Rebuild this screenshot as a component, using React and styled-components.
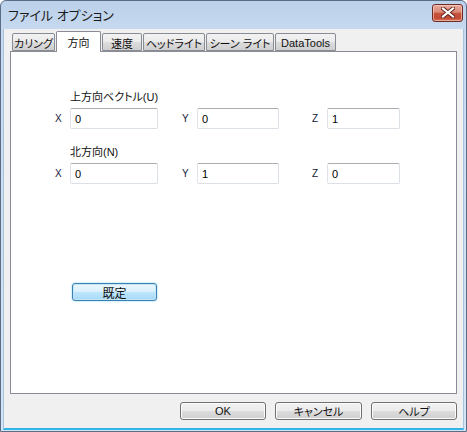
import React from 'react';
import styled, { createGlobalStyle } from 'styled-components';

const GlobalStyle = createGlobalStyle`
    html, body {
        margin: 0;
        padding: 0;
        background: #ffffff;
    }

    body {
        font-family: "Liberation Sans", "Noto Sans CJK JP", sans-serif;
        font-size: 11px;
        font-feature-settings: "palt";
        color: #000000;
    }
`;

const WindowStyled = styled.div`
    box-sizing: border-box;
    width: 467px;
    height: 432px;
    display: flex;
    flex-direction: column;
    border: 1px solid #5a6d84;
    border-radius: 6px 6px 0 0;
    background: linear-gradient(to bottom, #bcd1ea 0, #c6d9ef 30px, #d6e5f5 100%);
    overflow: hidden;
`;

const TitleBarStyled = styled.div`
    height: 28px;
    flex: none;
    display: flex;
    align-items: center;
    justify-content: space-between;
    padding: 0 3px 0 7px;
`;

const TitleStyled = styled.span`
    font-size: 13px;
    color: #1a1a1a;
    margin-top: -1px;
`;

const CloseButtonStyled = styled.div`
    box-sizing: border-box;
    width: 31px;
    height: 18px;
    margin-top: -5px;
    display: flex;
    align-items: center;
    justify-content: center;
    border: 1px solid #6e2d24;
    border-radius: 3px;
    background: linear-gradient(to bottom, #e9a99b 0, #dc8a78 45%, #c8553f 50%, #c24a34 80%, #d4715a 100%);
    box-shadow: inset 0 0 0 1px rgba(255, 220, 210, 0.55);
`;

const ClientStyled = styled.div`
    flex: 1;
    display: flex;
    flex-direction: column;
    margin: 0 2px 1px;
    background: #f0f0f0;
    border: 1px solid #a8c3e0;
    border-top: none;
    border-bottom: 2px solid #2fb6e6;
    padding: 2px 6px 8px 6px;
`;

const TabRowStyled = styled.div`
    display: flex;
    align-items: flex-end;
    height: 21px;
    margin-bottom: -1px;
    padding-left: 2px;
    position: relative;
    z-index: 1;
`;

const TabStyled = styled.div`
    box-sizing: border-box;
    width: ${p => p.$w}px;
    height: ${p => (p.$active ? 21 : 18)}px;
    margin-right: 1px;
    margin-bottom: ${p => (p.$active ? 0 : 1)}px;
    display: flex;
    align-items: center;
    justify-content: center;
    padding-top: ${p => (p.$active ? 0 : 1)}px;
    border: 1px solid #898c95;
    border-bottom: ${p => (p.$active ? 'none' : '1px solid #898c95')};
    border-radius: 2px 2px 0 0;
    background: ${p => (p.$active
        ? '#ffffff'
        : 'linear-gradient(to bottom, #f2f2f2 0, #ebebeb 50%, #dddddd 50%, #cfcfcf 100%)')};
    font-size: 11px;
    color: #111111;
    white-space: nowrap;
`;

const PanelStyled = styled.div`
    flex: 1;
    box-sizing: border-box;
    background: #ffffff;
    border: 1px solid #898c95;
    padding: 39px 0 0 44px;
`;

const HeadingStyled = styled.div`
    margin-left: 15px;
    height: 13px;
    line-height: 13px;
    font-size: 11px;
    color: #111111;
`;

const FieldRowStyled = styled.div`
    display: flex;
    align-items: center;
    margin-top: 4px;
    margin-bottom: ${p => p.$after}px;
`;

const FieldStyled = styled.div`
    width: ${p => p.$span}px;
    display: flex;
    align-items: center;
    flex: none;
`;

const AxisStyled = styled.span`
    width: 15px;
    font-size: 10px;
    color: #14213a;
`;

const InputStyled = styled.div`
    box-sizing: border-box;
    width: ${p => p.$w}px;
    height: 21px;
    padding: 0 4px;
    display: flex;
    align-items: center;
    border: 1px solid #dbdfe6;
    border-top-color: #abadb3;
    border-left-color: #e2e3ea;
    border-radius: 2px;
    background: #ffffff;
    font-size: 11px;
`;

const ButtonStyled = styled.div`
    box-sizing: border-box;
    width: ${p => p.$w}px;
    height: 18px;
    display: flex;
    align-items: center;
    justify-content: center;
    border: 1px solid ${p => (p.$primary ? '#3c7fb1' : '#707070')};
    border-radius: 3px;
    background: ${p => (p.$primary
        ? 'linear-gradient(to bottom, #eaf6fd 0, #d9f0fc 50%, #bee6fd 50%, #a7d9f5 100%)'
        : 'linear-gradient(to bottom, #f2f2f2 0, #ebebeb 50%, #dddddd 50%, #cfcfcf 100%)')};
    box-shadow: inset 0 0 0 1px ${p => (p.$primary ? '#c4e5f6' : '#fcfcfc')}
        ${p => (p.$primary ? ', 0 0 2px #6fd0f5' : '')};
    font-size: ${p => (p.$primary ? 12 : 11)}px;
    color: #111111;
`;

const DefaultButtonRowStyled = styled.div`
    margin: 99px 0 0 17px;
`;

const FooterStyled = styled.div`
    display: flex;
    justify-content: flex-end;
    gap: 9px;
    margin-top: 8px;
`;

const tabs = [
    { label: 'カリング', w: 43 },
    { label: '方向', w: 45, active: true },
    { label: '速度', w: 40 },
    { label: 'ヘッドライト', w: 62 },
    { label: 'シーン ライト', w: 68 },
    { label: 'DataTools', w: 61 },
];

function CloseGlyph() {
    return (
        <svg width="14" height="11" viewBox="0 0 14 11">
            <path d="M2 1.5 L12 9.5 M12 1.5 L2 9.5" stroke="#5b1f17" strokeWidth="4" strokeLinecap="square" />
            <path d="M2 1.5 L12 9.5 M12 1.5 L2 9.5" stroke="#ffffff" strokeWidth="2.2" strokeLinecap="square" />
        </svg>
    );
}

function VectorRow({ values, after }) {
    return (
        <FieldRowStyled $after={after}>
            <FieldStyled $span={127}>
                <AxisStyled>X</AxisStyled>
                <InputStyled $w={88}>{values[0]}</InputStyled>
            </FieldStyled>
            <FieldStyled $span={130}>
                <AxisStyled>Y</AxisStyled>
                <InputStyled $w={82}>{values[1]}</InputStyled>
            </FieldStyled>
            <FieldStyled $span={90}>
                <AxisStyled>Z</AxisStyled>
                <InputStyled $w={73}>{values[2]}</InputStyled>
            </FieldStyled>
        </FieldRowStyled>
    );
}

function App() {
    return (
        <>
            <GlobalStyle />
            <WindowStyled>
                <TitleBarStyled>
                    <TitleStyled>ファイル オプション</TitleStyled>
                    <CloseButtonStyled>
                        <CloseGlyph />
                    </CloseButtonStyled>
                </TitleBarStyled>

                <ClientStyled>
                    <TabRowStyled>
                        {tabs.map(t => (
                            <TabStyled key={t.label} $w={t.w} $active={t.active}>{t.label}</TabStyled>
                        ))}
                    </TabRowStyled>

                    <PanelStyled>
                        <HeadingStyled>上方向ベクトル(U)</HeadingStyled>
                        <VectorRow values={['0', '0', '1']} after={17} />

                        <HeadingStyled>北方向(N)</HeadingStyled>
                        <VectorRow values={['0', '1', '0']} after={0} />

                        <DefaultButtonRowStyled>
                            <ButtonStyled $w={85} $primary>既定</ButtonStyled>
                        </DefaultButtonRowStyled>
                    </PanelStyled>

                    <FooterStyled>
                        <ButtonStyled $w={86}>OK</ButtonStyled>
                        <ButtonStyled $w={87}>キャンセル</ButtonStyled>
                        <ButtonStyled $w={86}>ヘルプ</ButtonStyled>
                    </FooterStyled>
                </ClientStyled>
            </WindowStyled>
        </>
    );
}

export default App;
